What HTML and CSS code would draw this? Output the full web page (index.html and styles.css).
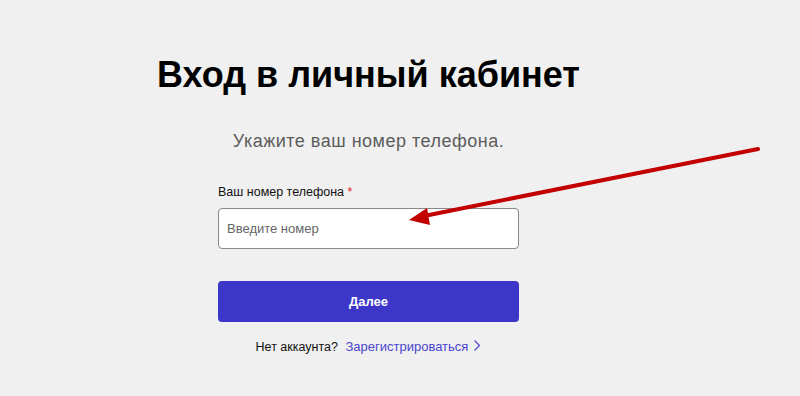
FILE: index.html
```html
<!DOCTYPE html>
<html lang="ru">

<head>
    <meta charset="UTF-8">
    <meta name="viewport" content="width=device-width, initial-scale=1.0">
    <title>Вход в личный кабинет</title>
    <link rel="stylesheet" href="styles.css">
</head>

<body>
    <div class="login">
        <h1 class="login-tit">Вход в личный кабинет</h1>
        <p class="login-sub">Укажите ваш номер телефона.</p>

        <form class="login-form">
            <label class="login-label" for="phone">Ваш номер телефона <span class="req">*</span></label>
            <input type="tel" id="phone" class="phone-ipt" placeholder="Введите номер">
            <button type="button" class="login-btn">Далее</button>
        </form>

        <div class="login-reg">
            Нет аккаунта? <a href="javascript:;">Зарегистрироваться<svg class="chev" width="8" height="13" viewBox="0 0 8 13"><path d="M1.5 1.5 6.5 6.5 1.5 11.5" fill="none" stroke="currentColor" stroke-width="1.2"/></svg></a>
        </div>
    </div>

    <!-- стрелка-указатель поверх формы -->
    <svg class="pointer" width="800" height="396" viewBox="0 0 800 396">
        <line x1="758" y1="149" x2="424" y2="216" stroke="#c20000" stroke-width="4" stroke-linecap="round"/>
        <polygon points="409,220 427,208 430,225" fill="#c20000"/>
    </svg>
</body>

</html>
```

FILE: styles.css
```css
* {
    margin: 0;
    padding: 0;
    box-sizing: border-box;
}

body {
    background: #f0f0f0;
    font-family: "Liberation Sans", Arial, sans-serif;
    color: #111;
}

a {
    text-decoration: none;
}

.login {
    width: 437px;
    margin-left: 150px;
    padding-top: 53px;
    text-align: center;
}

.login-tit {
    font-size: 36px;
    line-height: 44px;
    font-weight: bold;
    color: #000;
}

.login-sub {
    margin-top: 33px;
    font-size: 18px;
    line-height: 22px;
    letter-spacing: 0.5px;
    color: #5c5c5c;
}

.login-form {
    width: 301px;
    margin: 32px auto 0;
    text-align: left;
}

.login-label {
    display: block;
    font-size: 12.5px;
    line-height: 16px;
    color: #111;
}

.req {
    color: #e02020;
}

.phone-ipt {
    display: block;
    width: 100%;
    height: 41px;
    margin-top: 8px;
    padding: 0 8px;
    border: 1px solid #8a8a8a;
    border-radius: 4px;
    background: #fff;
    font-family: inherit;
    font-size: 13px;
    outline: none;
}

.phone-ipt::placeholder {
    color: #666;
}

.login-btn {
    display: block;
    width: 100%;
    height: 41px;
    margin-top: 32px;
    border: none;
    border-radius: 4px;
    background: #3c36c9;
    color: #fff;
    font-family: inherit;
    font-size: 13px;
    font-weight: bold;
}

.login-reg {
    margin-top: 16px;
    font-size: 12.5px;
    line-height: 18px;
    color: #111;
    text-align: center;
}

.login-reg a {
    margin-left: 4px;
    font-size: 13px;
    color: #4b45cf;
}

.chev {
    margin-left: 5px;
    vertical-align: -1px;
}

.pointer {
    position: absolute;
    left: 0;
    top: 0;
    pointer-events: none;
}
```
